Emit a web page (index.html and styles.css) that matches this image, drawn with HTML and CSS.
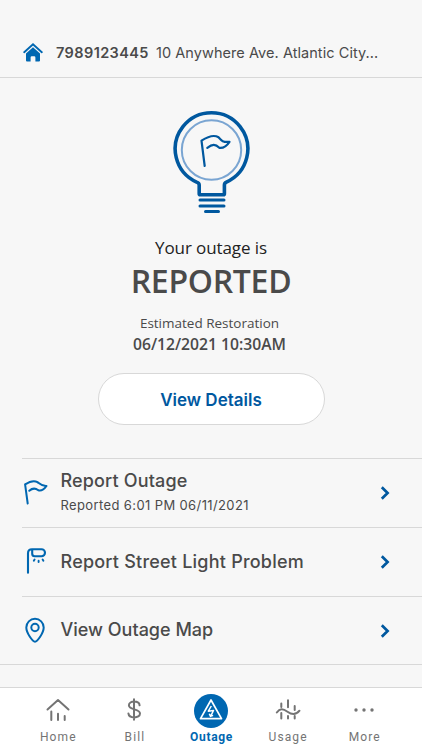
FILE: index.html
```html
<!DOCTYPE html>
<html lang="en">
<head>
    <meta charset="UTF-8">
    <meta name="viewport" content="width=device-width, initial-scale=1.0">
    <title>Outage</title>
    <link rel="stylesheet" href="styles.css">
</head>
<body>

<header class="account">
    <svg class="account-icon" width="20" height="20" viewBox="0 0 20 20">
        <path d="M1.200 9.200 10 1.300l8.800 7.900" fill="none" stroke="#0067b1" stroke-width="1.900" stroke-linecap="round"/>
        <path d="M3 10.400 10 4.300l7 6.100v7.200q0 1-1 1h-3.600v-4.200q0-1.200-1.200-1.200H8.800q-1.200 0-1.200 1.200v4.200H4q-1 0-1-1z" fill="#0067b1"/>
    </svg>
    <span class="account-number">7989123445</span>
    <span class="account-address">10 Anywhere Ave. Atlantic City...</span>
</header>

<main>
    <section class="status">
        <svg class="bulb" width="80" height="106" viewBox="0 0 80 106" fill="none" stroke="#00589f" stroke-linecap="round" stroke-linejoin="round">
            <path d="M53.400 83.800V75q0-2 2-2.900A36.300 36.300 0 1 0 25.600 72.100q2.600.9 2.600 2.900v8.800q0 1 1 1h23.200q1 0 1-1z" stroke-width="3.600"/>
            <circle cx="40.500" cy="40" r="29.700" stroke="#7aa5d2" stroke-width="2"/>
            <path d="M33.700 56 30.500 30.700q11-7.200 17-3.400c3 3.400 4 5 11 4.500q-4.500 6.800-10.200 6c-4-4-7-3.700-12 .1" stroke-width="2.200"/>
            <path d="M29 90h24M29 96h24M34.500 101.500h13" stroke-width="3"/>
        </svg>
        <div class="status-label">Your outage is</div>
        <h1>REPORTED</h1>
        <div class="restoration-label">Estimated Restoration</div>
        <div class="restoration-time">06/12/2021 10:30AM</div>
        <button class="details-button">View Details</button>
    </section>

    <nav class="actions">
        <a class="action">
            <svg class="action-icon" width="26" height="28" viewBox="0 0 26 28" fill="none" stroke="#0067b1" stroke-width="2" stroke-linecap="round" stroke-linejoin="round">
                <path d="M5.700 24.500 3.100 5.400q7.600-5 12.400-2.300c3 2.400 4.300 4.200 9 3.900q-4 5.600-8.200 4.300c-3.500-2.800-6-2.200-9 .5"/>
            </svg>
            <span class="action-text">
                <span class="action-title title-outage">Report Outage</span>
                <span class="action-note">Reported 6:01 PM 06/11/2021</span>
            </span>
            <svg class="chevron" width="10" height="16" viewBox="0 0 10 16"><path d="M1.800 2.200 7.600 8l-5.800 5.800"/></svg>
        </a>
        <a class="action">
            <svg class="action-icon" width="26" height="28" viewBox="0 0 26 28" fill="none" stroke="#0067b1" stroke-width="2.100" stroke-linecap="round" stroke-linejoin="round">
                <path d="M6 24.800V5.200q0-4 4-4h9.500a3.500 3.500 0 0 1 0 7h-6.800q-2.500 0-2.500-2.500V1.400"/>
                <path d="m12.600 11.500-.8 1.300M16.600 12.700v1.300M20.600 11.500l.8 1.300" stroke-width="1.900"/>
            </svg>
            <span class="action-text">
                <span class="action-title title-light">Report Street Light Problem</span>
            </span>
            <svg class="chevron" width="10" height="16" viewBox="0 0 10 16"><path d="M1.800 2.200 7.600 8l-5.800 5.800"/></svg>
        </a>
        <a class="action">
            <svg class="action-icon" width="26" height="28" viewBox="0 0 26 28" fill="none" stroke="#0067b1" stroke-width="2" stroke-linejoin="round">
                <path d="M13 24.700c-2.500 0-8.700-9-8.700-14.200a8.700 8.700 0 0 1 17.400 0c0 5.200-6.200 14.200-8.700 14.200z"/>
                <circle cx="13" cy="10.500" r="3.700"/>
            </svg>
            <span class="action-text">
                <span class="action-title title-map">View Outage Map</span>
            </span>
            <svg class="chevron" width="10" height="16" viewBox="0 0 10 16"><path d="M1.800 2.200 7.600 8l-5.800 5.800"/></svg>
        </a>
    </nav>
</main>

<footer class="tabs">
    <a class="tab">
        <svg width="34" height="34" viewBox="0 0 34 34" fill="none" stroke="#747474" stroke-width="2" stroke-linecap="round" stroke-linejoin="round">
            <path d="M6.500 15.500 17 6l10.500 9.500M10.300 17.500v8.500M17 19.700V26M23.700 22V26"/>
        </svg>
        <span>Home</span>
    </a>
    <a class="tab">
        <svg width="34" height="34" viewBox="0 0 34 34" fill="none" stroke="#747474" stroke-width="2" stroke-linecap="round">
            <path d="M17 5.300v20.400M22.600 11.300c-.4-4.900-10.700-5-10.700 0 0 5.200 11.100 3 11.100 8.300 0 5.100-11.100 5.100-11.600-.2"/>
        </svg>
        <span>Bill</span>
    </a>
    <a class="tab active">
        <svg width="34" height="34" viewBox="0 0 34 34" fill="none" stroke="#fff" stroke-linejoin="round">
            <circle cx="17" cy="17" r="17" fill="#0067b1" stroke="none"/>
            <path d="M17 6 27.500 24.700h-21z" stroke-width="1.700"/>
            <path d="m17.300 12-3 5.200 5.200-.8-2.700 5.600M15.300 19.800l1.200 2.600 2.600-1" stroke-width="1.500"/>
        </svg>
        <span>Outage</span>
    </a>
    <a class="tab">
        <svg width="34" height="34" viewBox="0 0 34 34" fill="none" stroke="#747474" stroke-width="2" stroke-linecap="round">
            <path d="M5.800 18.500c3-4.300 6-4.300 10.700-.8 4.700 3.400 8.700 3.100 12-1"/>
            <path d="M10.300 9.500V13M10.300 19v5.500M17 6.200v7M17 22v2.500M23.700 12v4M23.700 22v2.500"/>
        </svg>
        <span>Usage</span>
    </a>
    <a class="tab">
        <svg width="34" height="34" viewBox="0 0 34 34" fill="#747474">
            <circle cx="9" cy="16" r="1.700"/>
            <circle cx="17" cy="16" r="1.700"/>
            <circle cx="25" cy="16" r="1.700"/>
        </svg>
        <span>More</span>
    </a>
</footer>

</body>
</html>
```

FILE: styles.css
```css
* {
    box-sizing: border-box;
}
body {
    margin: 0;
    height: 750px;
    display: flex;
    flex-direction: column;
    overflow: hidden;
    background-color: #f7f7f7;
    color: #4a4a4a;
    font-family: Inter, sans-serif;
}

/* Account bar */
.account {
    display: flex;
    align-items: center;
    height: 78px;
    padding: 28px 0 0 23px;
    border-bottom: 1px solid #d8d8d8;
    white-space: nowrap;
    line-height: 20px;
}
.account-number {
    margin-left: 13px;
    width: 100px;
    font-size: 14.5px;
    font-weight: 600;
    letter-spacing: 0.4px;
}
.account-address {
    font-size: 14.5px;
    letter-spacing: 0.06px;
}

/* Outage status */
main {
    flex: 1;
}
.status {
    display: flex;
    flex-direction: column;
    align-items: center;
    height: 380px;
    padding-top: 32px;
    font-family: "Open Sans", sans-serif;
}
.bulb {
    display: block;
}
.status-label {
    margin-top: 20px;
    font-size: 17px;
    line-height: 24px;
    color: #222;
    letter-spacing: -0.1px;
}
h1 {
    margin: -1px 0 0;
    font-size: 32px;
    font-weight: 600;
    line-height: 44px;
    letter-spacing: -0.3px;
}
.restoration-label {
    margin: 10px 3px 0 0;
    font-size: 13.5px;
    line-height: 20px;
}
.restoration-time {
    margin: 1px 3px 0 0;
    font-size: 15.7px;
    font-weight: 600;
    line-height: 21px;
}
.details-button {
    width: 227px;
    height: 52px;
    margin-top: 18px;
    padding-top: 3px;
    border: 1px solid #d8d8d8;
    border-radius: 26px;
    background-color: #fff;
    color: #00589f;
    font-family: Inter, sans-serif;
    font-size: 17px;
    font-weight: 600;
}

/* Action list */
.actions {
    border-bottom: 1px solid #d8d8d8;
}
.action {
    display: flex;
    align-items: center;
    height: 69px;
    margin-left: 22px;
    padding-right: 32px;
    border-top: 1px solid #d8d8d8;
}
.action:last-child {
    height: 68px;
}
.action-icon {
    flex: none;
}
.action-text {
    display: flex;
    flex-direction: column;
    flex: 1;
    margin-left: 12.5px;
}
.action-title {
    font-size: 18px;
    font-weight: 500;
    line-height: 24px;
}
.title-outage {
    margin-top: -1px;
    letter-spacing: 0.15px;
}
.title-light {
    letter-spacing: 0.22px;
}
.title-map {
    padding-bottom: 1px;
}
.action-note {
    margin: 2px 0;
    font-size: 13px;
    line-height: 20px;
    letter-spacing: 0.38px;
}
.chevron {
    fill: none;
    stroke: #00589f;
    stroke-width: 2.7;
}

/* Bottom tabs */
.tabs {
    display: grid;
    grid-template-columns: repeat(5, 76.6px);
    justify-content: center;
    height: 63px;
    padding-top: 6px;
    border-top: 1px solid #d8d8d8;
    background-color: #fff;
}
.tab {
    display: flex;
    flex-direction: column;
    align-items: center;
    color: #747474;
    font-family: Roboto, sans-serif;
    font-size: 12px;
    line-height: 16px;
    letter-spacing: 1.1px;
}
.tab span {
    margin: 1px 0 0 1px;
}
.tab.active {
    color: #0067b1;
    font-weight: 700;
    letter-spacing: 0.7px;
}
```
